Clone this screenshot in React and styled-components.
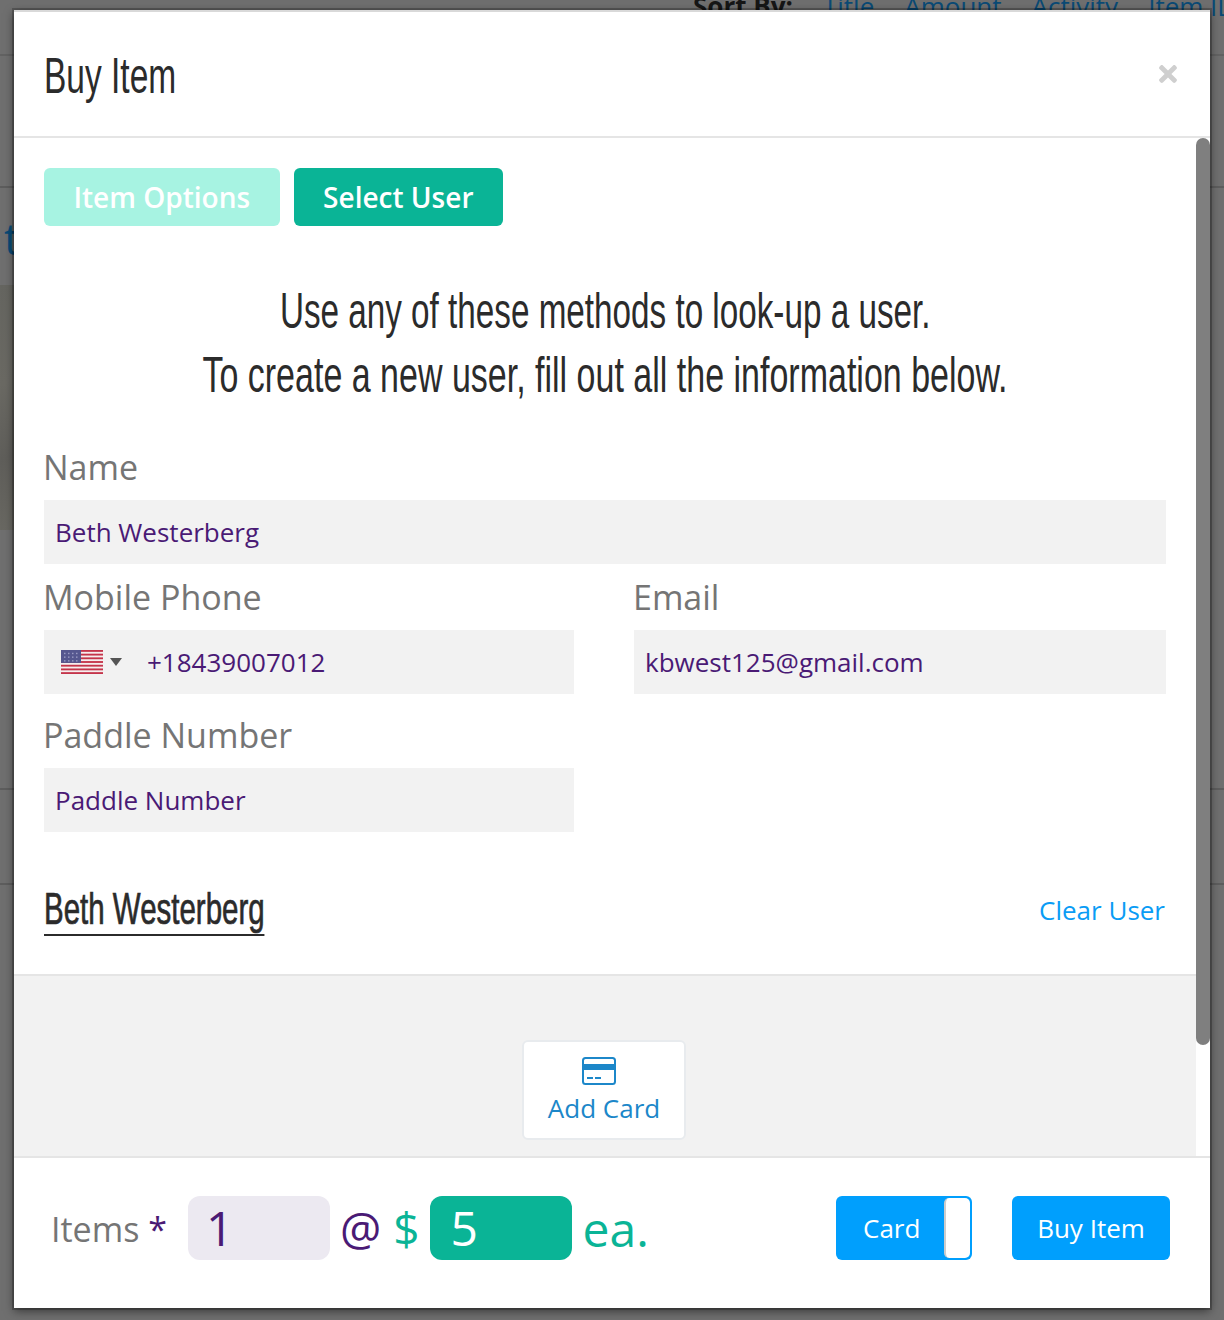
import React from "react";
import styled, { createGlobalStyle } from "styled-components";
import { FaTimes } from "react-icons/fa";

const Global = createGlobalStyle`
  html, body {
    margin: 0;
    padding: 0;
    width: 1224px;
    height: 1320px;
    overflow: hidden;
    background: #6f6f6f;
    font-family: "Open Sans", "Liberation Sans", sans-serif;
  }
  * { box-sizing: border-box; }
`;

function Flag() {
  const stripes = [0, 2, 4, 6, 8, 10, 12];
  return (
    <svg width="42" height="24" viewBox="0 0 42 26" preserveAspectRatio="none">
      <rect width="42" height="26" fill="#f6eeee" />
      {stripes.map((i) => (
        <rect key={i} y={i * 2} width="42" height="2" fill="#c4344a" />
      ))}
      <rect width="20" height="14" fill="#55578f" />
      {[3, 7, 11].map((y) =>
        [3, 7, 11, 15].map((x) => <rect key={x + "-" + y} x={x} y={y} width="1.5" height="1.5" fill="#9a9bc4" />)
      )}
    </svg>
  );
}

function CardIcon() {
  return (
    <svg width="34" height="28" viewBox="0 0 34 28">
      <rect x="1" y="1" width="32" height="26" rx="2.5" fill="none" stroke="#1c87c9" strokeWidth="2" />
      <rect x="1" y="7" width="32" height="6" fill="#1c87c9" />
      <rect x="5" y="20" width="6" height="2" fill="#1c87c9" />
      <rect x="13" y="20" width="6" height="2" fill="#1c87c9" />
    </svg>
  );
}

export default function App() {
  return (
    <>
      <Global />
      <Page>
        <SortRow>
          <SortLabel>Sort By:</SortLabel>
          <SortLink>Title</SortLink>
          <SortLink>Amount</SortLink>
          <SortLink>Activity</SortLink>
          <SortLink>Item ID</SortLink>
        </SortRow>
        <PageBand $height={132} />
        <PageTitle>t</PageTitle>
        <Picture />
        <PageBand $height={260} />
        <PageBand $height={95} />
      </Page>
      <Modal>
        <Header>
          <Title>Buy Item</Title>
          <Close>
            <FaTimes />
          </Close>
        </Header>
        <BodyWrap>
          <Content>
            <UserForm>
              <Tabs>
                <Tab $light>Item Options</Tab>
                <Tab>Select User</Tab>
              </Tabs>
              <Intro>
                <IntroLine $squeeze={0.665}>Use any of these methods to look-up a user.</IntroLine>
                <IntroLine $squeeze={0.68}>To create a new user, fill out all the information below.</IntroLine>
              </Intro>
              <Label>Name</Label>
              <Field>Beth Westerberg</Field>
              <FieldGrid>
                <div>
                  <Label>Mobile Phone</Label>
                  <Field>
                    <FlagBox>
                      <Flag />
                      <Caret />
                    </FlagBox>
                    +18439007012
                  </Field>
                </div>
                <div>
                  <Label>Email</Label>
                  <Field>kbwest125@gmail.com</Field>
                </div>
                <div>
                  <Label>Paddle Number</Label>
                  <Field>Paddle Number</Field>
                </div>
              </FieldGrid>
              <UserRow>
                <UserName>Beth Westerberg</UserName>
                <ClearLink>Clear User</ClearLink>
              </UserRow>
            </UserForm>
            <CardArea>
              <AddCard>
                <IconSlot>
                  <CardIcon />
                </IconSlot>
                Add Card
              </AddCard>
            </CardArea>
          </Content>
          <ScrollTrack>
            <ScrollThumb />
          </ScrollTrack>
        </BodyWrap>
        <Footer>
          <ItemsLabel>
            Items <Star>*</Star>
          </ItemsLabel>
          <Amount>1</Amount>
          <At>@</At>
          <Dollar>$</Dollar>
          <Amount $teal>5</Amount>
          <Each>ea.</Each>
          <Actions>
            <Toggle>
              <ToggleText>Card</ToggleText>
              <Knob />
            </Toggle>
            <BuyButton>Buy Item</BuyButton>
          </Actions>
        </Footer>
      </Modal>
    </>
  );
}

const Page = styled.div`
  width: 1224px;
  height: 1320px;
  overflow: hidden;
  background: #6f6f6f;
`;

const SortRow = styled.div`
  height: 66px;
  margin-top: -10px;
  padding: 0 0 0 693px;
  display: flex;
  gap: 30px;
  font-size: 26px;
  line-height: 32px;
  white-space: nowrap;
  border-bottom: 2px solid #626262;
`;

const SortLabel = styled.span`
  font-weight: 700;
  color: #161616;
`;

const SortLink = styled.span`
  color: #0a4a75;
`;

const PageBand = styled.div`
  height: ${(props) => props.$height}px;
  border-bottom: 2px solid #5d5d5d;
`;

const PageTitle = styled.div`
  height: 97px;
  padding-left: 4px;
  font-size: 44px;
  line-height: 100px;
  color: #0a4a75;
`;

const Picture = styled.div`
  width: 14px;
  height: 245px;
  background: linear-gradient(160deg, #656560 0%, #6a6963 40%, #5f5e5a 70%, #696862 100%);
`;

const Modal = styled.div`
  position: absolute;
  top: 10px;
  left: 14px;
  width: 1196px;
  height: 1298px;
  display: flex;
  flex-direction: column;
  background: #fff;
  border-top: 2px solid #d9d9d9;
  box-shadow: 0 0 0 2px rgba(0, 0, 0, 0.22), 0 3px 9px rgba(0, 0, 0, 0.5);
`;

const Header = styled.div`
  height: 126px;
  flex: none;
  padding: 0 30px;
  display: flex;
  align-items: center;
  justify-content: space-between;
  border-bottom: 2px solid #e5e5e5;
`;

const Title = styled.h4`
  margin: 4px 0 0;
  font-family: "Liberation Sans", sans-serif;
  font-weight: 400;
  font-size: 50px;
  line-height: 64px;
  white-space: nowrap;
  color: #2b2b2b;
  transform: scaleX(0.67);
  transform-origin: left center;
`;

const Close = styled.div`
  display: flex;
  margin-right: -1px;
  font-size: 26px;
  color: #cfcfcf;
`;

const BodyWrap = styled.div`
  flex: 1;
  min-height: 0;
  display: flex;
`;

const Content = styled.div`
  flex: 1;
  min-width: 0;
  display: flex;
  flex-direction: column;
`;

const UserForm = styled.div`
  height: 838px;
  flex: none;
  padding: 30px 30px 0;
  border-bottom: 2px solid #e5e5e5;
`;

const Tabs = styled.div`
  display: flex;
  gap: 14px;
`;

const Tab = styled.div`
  height: 58px;
  padding: 0 29.5px;
  display: flex;
  align-items: center;
  border-radius: 6px;
  font-size: 28px;
  font-weight: 600;
  color: #fff;
  background: ${(props) => (props.$light ? "#a7f3e2" : "#0ab496")};
`;

const Intro = styled.div`
  margin: 53px 0 39px;
  display: flex;
  flex-direction: column;
  align-items: center;
`;

const IntroLine = styled.div`
  flex: none;
  white-space: nowrap;
  font-family: "Liberation Sans", sans-serif;
  font-size: 50px;
  line-height: 64px;
  color: #2b2b2b;
  transform: scaleX(${(props) => props.$squeeze});
`;

const Label = styled.div`
  height: 54px;
  margin-left: -1px;
  font-size: 34px;
  line-height: 42px;
  color: #757575;
`;

const Field = styled.div`
  height: 64px;
  padding-left: 11px;
  display: flex;
  align-items: center;
  font-size: 26px;
  color: #4a1a75;
  background: #f2f2f2;
`;

const FieldGrid = styled.div`
  margin-top: 12px;
  display: grid;
  grid-template-columns: 530px 532px;
  column-gap: 60px;
  row-gap: 20px;
`;

const FlagBox = styled.div`
  width: 92px;
  padding-left: 6px;
  display: flex;
  align-items: center;
  gap: 7px;
`;

const Caret = styled.div`
  width: 0;
  height: 0;
  border-left: 6px solid transparent;
  border-right: 6px solid transparent;
  border-top: 8px solid #555;
`;

const UserRow = styled.div`
  margin-top: 52px;
  display: flex;
  align-items: center;
  justify-content: space-between;
`;

const UserName = styled.div`
  font-family: "Liberation Sans", sans-serif;
  font-size: 44px;
  line-height: 50px;
  white-space: nowrap;
  color: #2b2b2b;
  -webkit-text-stroke: 0.7px #2b2b2b;
  border-bottom: 2px solid #2b2b2b;
  transform: scaleX(0.67);
  transform-origin: left center;
`;

const ClearLink = styled.div`
  margin-right: 1px;
  font-size: 26px;
  color: #0a9cf5;
`;

const CardArea = styled.div`
  flex: 1;
  padding: 64px 2px 0 0;
  display: flex;
  justify-content: center;
  background: #f2f2f2;
`;

const AddCard = styled.div`
  width: 164px;
  height: 100px;
  padding-top: 13px;
  display: flex;
  flex-direction: column;
  align-items: center;
  font-size: 26px;
  line-height: 40px;
  color: #1c87c9;
  background: #fff;
  border: 2px solid #e8ebee;
  border-radius: 6px;
`;

const IconSlot = styled.div`
  height: 33px;
  margin-right: 10px;
`;

const ScrollTrack = styled.div`
  width: 14px;
  flex: none;
  background: #fff;
`;

const ScrollThumb = styled.div`
  height: 907px;
  background: #7f7f7f;
  border-radius: 7px;
`;

const Footer = styled.div`
  height: 152px;
  flex: none;
  padding: 38px 40px 0 37px;
  display: flex;
  align-items: flex-start;
  border-top: 2px solid #e5e5e5;
`;

const ItemsLabel = styled.div`
  width: 137px;
  font-size: 34px;
  line-height: 66px;
  color: #757575;
`;

const Star = styled.span`
  color: #4a1a75;
`;

const Amount = styled.div`
  width: 142px;
  height: 64px;
  padding-left: ${(props) => (props.$teal ? 21 : 18)}px;
  font-size: 48px;
  line-height: 64px;
  border-radius: 12px;
  color: ${(props) => (props.$teal ? "#fff" : "#4a1a75")};
  background: ${(props) => (props.$teal ? "#0ab496" : "#ece9f1")};
`;

const At = styled.div`
  margin-left: 10px;
  font-size: 46px;
  line-height: 64px;
  color: #4a1a75;
`;

const Dollar = styled.div`
  margin: 0 10px 0 12px;
  font-size: 46px;
  line-height: 64px;
  color: #0ab496;
`;

const Each = styled.div`
  margin-left: 11px;
  font-size: 48px;
  line-height: 66px;
  color: #0ab496;
`;

const Actions = styled.div`
  margin-left: auto;
  display: flex;
  gap: 40px;
`;

const Toggle = styled.div`
  width: 136px;
  height: 64px;
  padding: 2px;
  display: flex;
  align-items: stretch;
  justify-content: space-between;
  border-radius: 6px;
  background: #009ffd;
`;

const ToggleText = styled.div`
  padding-left: 25px;
  font-size: 26px;
  line-height: 60px;
  color: #fff;
`;

const Knob = styled.div`
  width: 26px;
  background: #fff;
  border-left: 2px solid #ccc;
  border-radius: 5px;
`;

const BuyButton = styled.div`
  width: 158px;
  height: 64px;
  text-align: center;
  font-size: 26px;
  line-height: 64px;
  color: #fff;
  border-radius: 6px;
  background: #009ffd;
`;
